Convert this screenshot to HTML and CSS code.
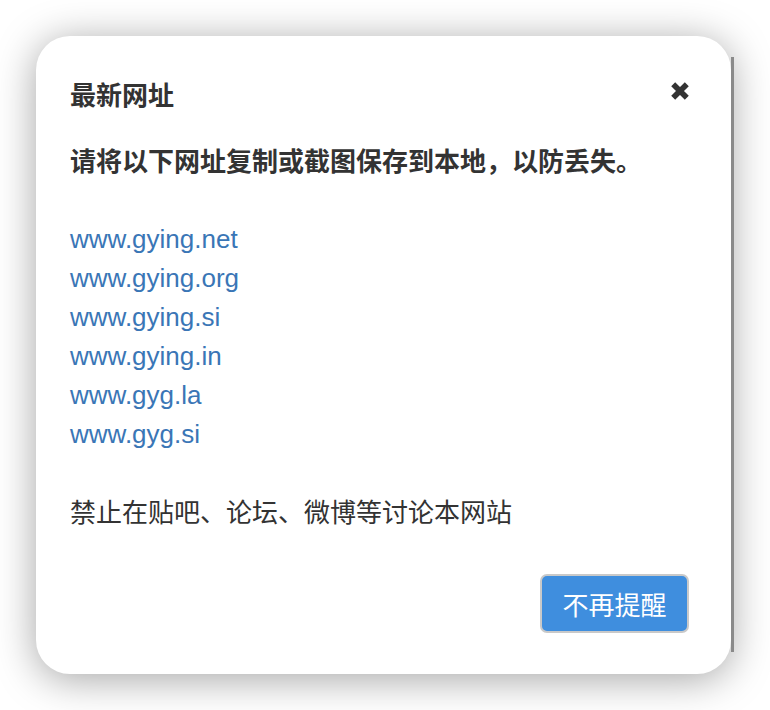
FILE: index.html
```html
<!DOCTYPE html>
<html lang="zh-CN">
<head>
<meta charset="utf-8">
<title>最新网址</title>
<link rel="stylesheet" href="styles.css">
</head>
<body>
<div class="dialog">
  <div class="dialog-head">
    <h2 class="dialog-title">最新网址</h2>
    <button class="close" aria-label="关闭">
      <svg width="20" height="20" viewBox="0 0 20 20"><path d="M3.2 3.2 L16.8 16.8 M16.8 3.2 L3.2 16.8" stroke="#333" stroke-width="5.6" stroke-linecap="butt" fill="none"/></svg>
    </button>
  </div>
  <p class="lead">请将以下网址复制或截图保存到本地，以防丢失。</p>
  <ul class="links">
    <li><a href="#">www.gying.net</a></li>
    <li><a href="#">www.gying.org</a></li>
    <li><a href="#">www.gying.si</a></li>
    <li><a href="#">www.gying.in</a></li>
    <li><a href="#">www.gyg.la</a></li>
    <li><a href="#">www.gyg.si</a></li>
  </ul>
  <p class="note">禁止在贴吧、论坛、微博等讨论本网站</p>
  <div class="actions">
    <button class="btn">不再提醒</button>
  </div>
  <span class="scroll-strip"></span>
</div>
</body>
</html>
```
FILE: styles.css
```css
html, body {
  margin: 0;
  padding: 0;
  background: #fff;
}
body {
  padding: 36px 0 36px 36px;
  min-height: 710px;
  box-sizing: border-box;
  font-family: "Liberation Sans", "Noto Sans CJK SC", sans-serif;
  color: #333;
}
.dialog {
  position: relative;
  width: 695px;
  box-sizing: border-box;
  height: 638px;
  background: #fff;
  border-radius: 34px;
  box-shadow: 0 5px 40px rgba(0, 0, 0, 0.36);
  padding: 38px 42px 41px 34px;
  display: flex;
  flex-direction: column;
}
.dialog-head {
  display: flex;
  justify-content: space-between;
  align-items: flex-start;
}
.dialog-title {
  margin: 0;
  font-family: "Noto Sans CJK SC", sans-serif;
  font-size: 26px;
  line-height: 40px;
  font-weight: 700;
  color: #333;
}
.close {
  border: 0;
  background: none;
  padding: 0;
  margin: 7px -1px 0 0;
  width: 20px;
  height: 20px;
  display: block;
  cursor: pointer;
}
.close svg { display: block; }
.lead {
  margin: 26px 0 0;
  font-family: "Noto Sans CJK SC", sans-serif;
  font-size: 26px;
  line-height: 39px;
  font-weight: 700;
  color: #333;
}
.links {
  list-style: none;
  margin: 41px 0 0;
  padding: 0;
}
.links li {
  font-size: 26px;
  line-height: 39px;
}
.links a {
  color: #3a76b6;
  text-decoration: none;
  font-family: "Liberation Sans", Arial, sans-serif;
}
.note {
  margin: 37px 0 0;
  font-family: "Noto Sans CJK SC", sans-serif;
  font-size: 26px;
  line-height: 39px;
  color: #333;
}
.actions {
  margin-top: auto;
  display: flex;
  justify-content: flex-end;
}
.btn {
  width: 149px;
  height: 59px;
  box-sizing: border-box;
  background: #3f8ede;
  border: 2px solid #c9c9c9;
  border-radius: 7px;
  color: #fff;
  font-family: "Noto Sans CJK SC", sans-serif;
  font-size: 26px;
  line-height: 1;
  padding: 0;
  cursor: pointer;
}
.scroll-strip {
  position: absolute;
  right: -3px;
  top: 21px;
  bottom: 22px;
  width: 3px;
  background: #8a8a8a;
}
```
